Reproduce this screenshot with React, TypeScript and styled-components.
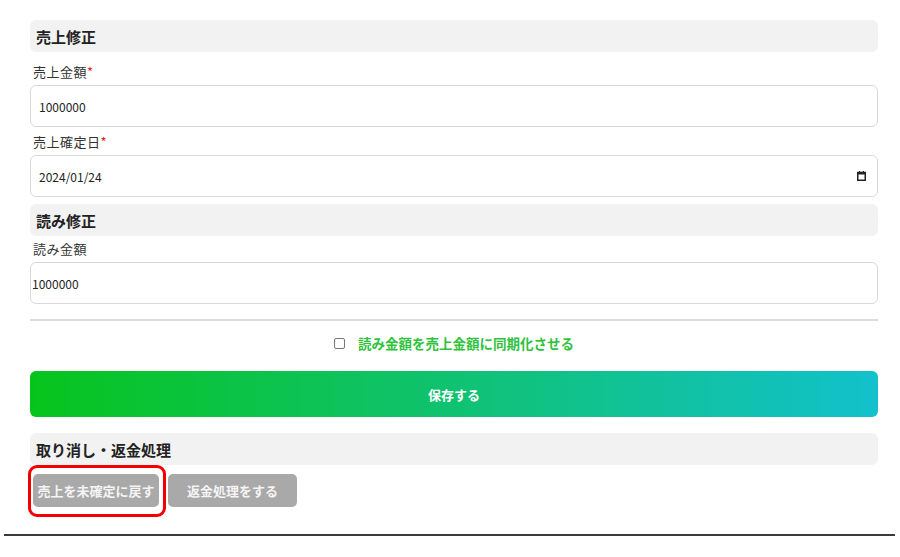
import styled, { createGlobalStyle } from "styled-components";

const GlobalStyle = createGlobalStyle`
  body {
    margin: 0;
    background: #fff;
    font-family: "Noto Sans CJK JP", "Noto Sans", sans-serif;
    color: #222;
  }
`;

const Page = styled.div`
  width: 900px;
  padding-top: 20px;
`;

const Container = styled.div`
  padding: 0 22px 0 30px;
`;

const SectionTitle = styled.div<{ $gapBelow: number; $gapAbove?: number }>`
  height: 32px;
  display: flex;
  align-items: center;
  padding-left: 6px;
  background: #f2f2f2;
  border-radius: 6px;
  font-size: 15px;
  font-weight: 700;
  color: #222;
  margin-top: ${(p) => p.$gapAbove ?? 0}px;
  margin-bottom: ${(p) => p.$gapBelow}px;
`;

const Field = styled.div`
  margin-bottom: 5px;
`;

const Label = styled.div`
  height: 20px;
  line-height: 20px;
  padding-left: 3px;
  font-size: 13px;
  letter-spacing: 0.5px;
  color: #333;
  margin-bottom: 3px;
`;

const Required = styled.span`
  color: #e0201c;
`;

const TextInput = styled.input<{ $flush?: boolean }>`
  box-sizing: border-box;
  width: 100%;
  height: 42px;
  border: 1px solid #d9d9d9;
  border-radius: 6px;
  padding: 0 0 0 ${(p) => (p.$flush ? 1 : 8)}px;
  font-family: inherit;
  font-size: 12px;
  color: #222;
  background: #fff;
  outline: none;
`;

const DateBox = styled.div`
  box-sizing: border-box;
  height: 42px;
  border: 1px solid #d9d9d9;
  border-radius: 6px;
  padding: 0 11px 0 8px;
  display: flex;
  align-items: center;
  font-size: 12px;
  color: #222;
`;

const DateText = styled.span`
  flex: 1;
`;

const Divider = styled.hr`
  margin: 15px 0 0;
  border: none;
  height: 2px;
  background: #dcdcdc;
`;

const SyncRow = styled.label`
  display: flex;
  justify-content: center;
  align-items: center;
  gap: 13px;
  height: 20px;
  margin-top: 12px;
  font-size: 13.5px;
  font-weight: 700;
  color: #2fc23c;
`;

const Check = styled.span`
  box-sizing: border-box;
  width: 11px;
  height: 11px;
  border: 1px solid #777;
  border-radius: 2px;
  background: #fff;
`;

const SaveButton = styled.button`
  display: block;
  width: 100%;
  height: 46px;
  margin-top: 18px;
  border: none;
  border-radius: 6px;
  background: linear-gradient(90deg, #07c41c 0%, #10c27a 55%, #12c1cc 100%);
  color: #fff;
  font-family: inherit;
  font-size: 13px;
  font-weight: 700;
`;

const ButtonRow = styled.div`
  display: flex;
  gap: 9px;
  padding-left: 3px;
`;

const GrayButton = styled.button<{ $width: number }>`
  position: relative;
  width: ${(p) => p.$width}px;
  height: 33px;
  border: none;
  border-radius: 5px;
  background: #a9a9a9;
  color: #f4f4f4;
  font-family: inherit;
  font-size: 13px;
  font-weight: 700;
  padding: 0;
  white-space: nowrap;
`;

const Highlight = styled.span`
  position: absolute;
  left: -5px;
  top: -9px;
  right: -7px;
  bottom: -10px;
  border: 3px solid #f40000;
  border-radius: 9px;
  pointer-events: none;
`;

const BottomRule = styled.div`
  margin: 27px 5px 0 4px;
  height: 2px;
  background: #3a3a3a;
`;

const CalendarIcon = () => (
  <svg width="9" height="10" viewBox="0 0 9 10">
    <rect x="0.75" y="1.5" width="7.5" height="7.75" fill="none" stroke="#222" strokeWidth="1.5" />
    <rect x="0" y="1" width="9" height="2.5" fill="#222" />
    <rect x="2" y="0" width="1.2" height="2" fill="#222" />
    <rect x="5.8" y="0" width="1.2" height="2" fill="#222" />
  </svg>
);

export default function App() {
  return (
    <Page>
      <GlobalStyle />
      <Container>
        <SectionTitle $gapBelow={10}>売上修正</SectionTitle>
        <Field>
          <Label>
            売上金額<Required>*</Required>
          </Label>
          <TextInput defaultValue="1000000" />
        </Field>
        <Field>
          <Label>
            売上確定日<Required>*</Required>
          </Label>
          <DateBox>
            <DateText>2024/01/24</DateText>
            <CalendarIcon />
          </DateBox>
        </Field>

        <SectionTitle $gapAbove={7} $gapBelow={3}>
          読み修正
        </SectionTitle>
        <Field>
          <Label>読み金額</Label>
          <TextInput $flush defaultValue="1000000" />
        </Field>

        <Divider />
        <SyncRow>
          <Check />
          読み金額を売上金額に同期化させる
        </SyncRow>
        <SaveButton>保存する</SaveButton>

        <SectionTitle $gapAbove={16} $gapBelow={9}>
          取り消し・返金処理
        </SectionTitle>
        <ButtonRow>
          <GrayButton $width={126}>
            売上を未確定に戻す
            <Highlight />
          </GrayButton>
          <GrayButton $width={129}>返金処理をする</GrayButton>
        </ButtonRow>
      </Container>
      <BottomRule />
    </Page>
  );
}
